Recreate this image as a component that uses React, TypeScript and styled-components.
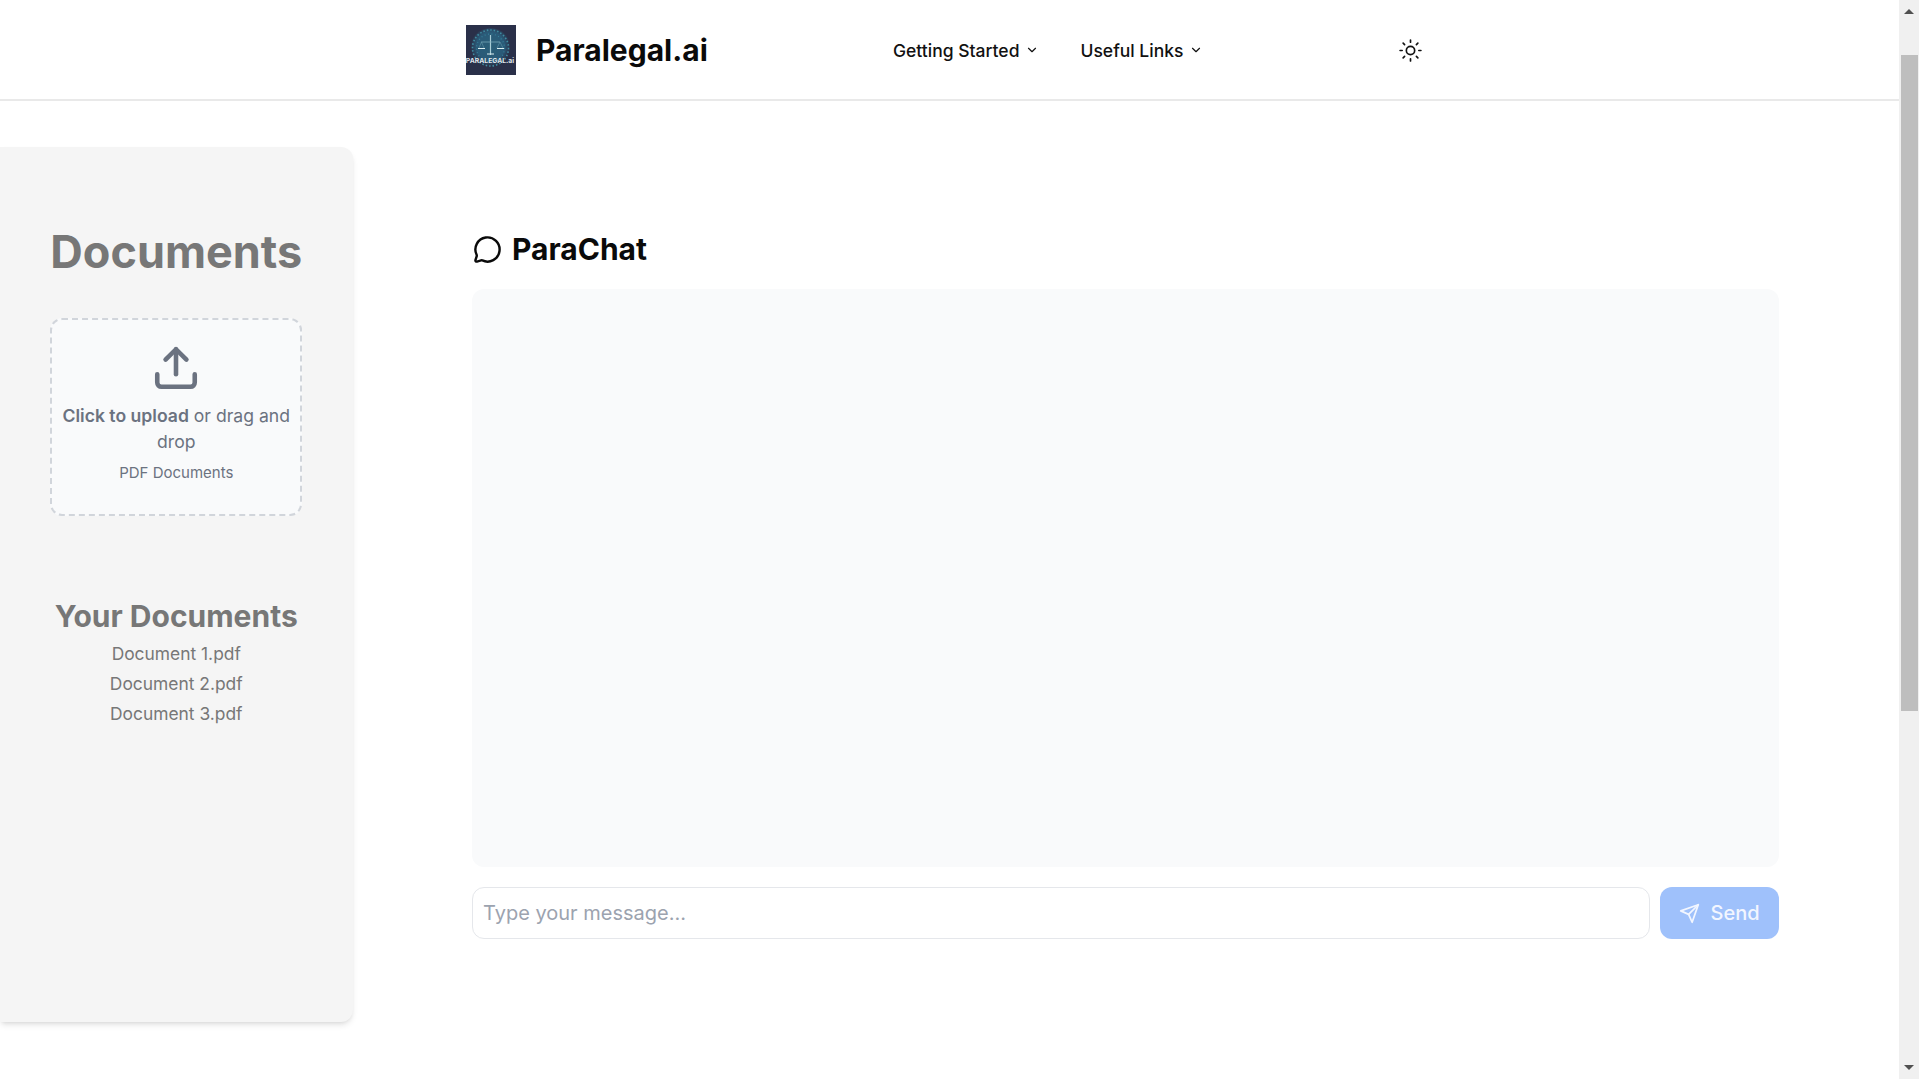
import React from "react";
import styled, { createGlobalStyle } from "styled-components";
import { ChevronDown, MessageCircle, Sun, Upload } from "lucide-react";
import { FiSend } from "react-icons/fi";

const GlobalStyle = createGlobalStyle`
  html, body {
    margin: 0;
    padding: 0;
    height: 100%;
    overflow: hidden;
    background: #fff;
    font-family: "Inter", "Liberation Sans", sans-serif;
  }
  * {
    box-sizing: border-box;
  }
`;

const documents = ["Document 1.pdf", "Document 2.pdf", "Document 3.pdf"];
const navItems = ["Getting Started", "Useful Links"];

const Logo = () => (
  <LogoBox viewBox="0 0 50 50" role="img" aria-label="Paralegal.ai logo">
    <defs>
      <radialGradient id="logoGlow" cx="50%" cy="45%" r="50%">
        <stop offset="0%" stopColor="#2a5f78" />
        <stop offset="70%" stopColor="#2a5a78" />
        <stop offset="100%" stopColor="#2a3048" />
      </radialGradient>
    </defs>
    <rect width="50" height="50" fill="#2a3049" />
    <circle cx="24.5" cy="23" r="20" fill="url(#logoGlow)" />
    <circle cx="24.5" cy="23" r="18" fill="none" stroke="#3f8ea3" strokeWidth="1.6" strokeDasharray="1.5 2" />
    <circle cx="24.5" cy="23" r="14" fill="none" stroke="#37809a" strokeWidth="1.2" strokeDasharray="1 2.5" />
    <path d="M24.5 10v20" stroke="#a9cdd6" strokeWidth="1.2" fill="none" />
    <path d="M15 17h19" stroke="#7fb0bd" strokeWidth="0.7" fill="none" />
    <path d="M13 23l2.5-6 2.5 6M31 23l3-6 3 6" stroke="#6fa4b2" strokeWidth="0.5" fill="none" />
    <path d="M12 23.5h7M31 23.5h7M21 29h7" stroke="#dbeef0" strokeWidth="1" />
    <text x="24" y="37.5" textAnchor="middle" fontFamily="Inter, sans-serif" fontSize="6.8" fontWeight="700" fill="#dfe4ea">
      PARALEGAL.ai
    </text>
  </LogoBox>
);

export default function App() {
  return (
    <Page>
      <GlobalStyle />
      <Content>
        <Header>
          <HeaderInner>
            <Brand>
              <Logo />
              <BrandName>Paralegal.ai</BrandName>
            </Brand>
            <Nav>
              {navItems.map(item => (
                <NavItem key={item}>
                  {item}
                  <ChevronDown size={14} strokeWidth={2} />
                </NavItem>
              ))}
            </Nav>
            <ThemeToggle>
              <Sun size={25} strokeWidth={1.6} />
            </ThemeToggle>
          </HeaderInner>
        </Header>
        <Body>
          <Sidebar>
            <SidebarTitle>Documents</SidebarTitle>
            <DropZone>
              <Upload size={50} strokeWidth={2.2} />
              <DropText>
                <strong>Click to upload</strong> or drag and drop
              </DropText>
              <DropHint>PDF Documents</DropHint>
            </DropZone>
            <ListTitle>Your Documents</ListTitle>
            <DocList>
              {documents.map(doc => (
                <DocItem key={doc}>{doc}</DocItem>
              ))}
            </DocList>
          </Sidebar>
          <Chat>
            <ChatTitle>
              <MessageCircle size={29} strokeWidth={2} />
              ParaChat
            </ChatTitle>
            <ChatWindow />
            <Composer>
              <MessageInput placeholder="Type your message..." />
              <SendButton disabled>
                <FiSend size={21} />
                Send
              </SendButton>
            </Composer>
          </Chat>
        </Body>
      </Content>
      <ScrollBar>
        <ArrowUp />
        <ScrollThumb />
        <ArrowDown />
      </ScrollBar>
    </Page>
  );
}

const Page = styled.div`
  display: flex;
  width: 100%;
  height: 100vh;
  overflow: hidden;
`;

const Content = styled.div`
  flex: 1;
  min-width: 0;
`;

const Header = styled.header`
  height: 101px;
  border-bottom: 2px solid #e9e9e9;
`;

const HeaderInner = styled.div`
  display: flex;
  align-items: center;
  width: 968px;
  height: 100%;
  margin: 0 auto;
  padding-left: 0.5px;
`;

const Brand = styled.div`
  display: flex;
  align-items: center;
  gap: 20px;
  width: 427px;
`;

const LogoBox = styled.svg`
  width: 50px;
  height: 50px;
  flex: none;
`;

const BrandName = styled.span`
  font-size: 30px;
  font-weight: 700;
  color: #0a0a0a;
`;

const Nav = styled.nav`
  display: flex;
  gap: 41px;
  margin-top: 1px;
`;

const NavItem = styled.div`
  display: flex;
  align-items: center;
  gap: 6px;
  font-size: 17.5px;
  font-weight: 500;
  color: #111;
`;

const ThemeToggle = styled.div`
  display: flex;
  margin-top: 1px;
  margin-left: auto;
  margin-right: 11px;
  color: #111;
`;

const Body = styled.main`
  display: flex;
  align-items: flex-start;
  padding-top: 46px;
`;

const Sidebar = styled.aside`
  display: flex;
  flex-direction: column;
  align-items: center;
  width: 352.5px;
  height: 875px;
  flex: none;
  padding-top: 77px;
  background: #f5f5f5;
  border-radius: 0 12px 12px 0;
  box-shadow: 0 4px 6px -1px rgba(0, 0, 0, 0.1), 0 2px 4px -2px rgba(0, 0, 0, 0.1);
  color: #777;
`;

const SidebarTitle = styled.h2`
  margin: 0 0 38px;
  font-size: 45px;
  line-height: 56px;
  font-weight: 700;
`;

const DropZone = styled.div`
  display: flex;
  flex-direction: column;
  align-items: center;
  width: 252px;
  height: 198px;
  padding: 23px 8px 0;
  background: #f9fafb;
  border: 2px dashed #d1d5db;
  border-radius: 12px;
  color: #6b7280;
`;

const DropText = styled.p`
  margin: 10px 0 0;
  font-size: 17.6px;
  line-height: 25.5px;
  text-align: center;

  strong {
    font-weight: 600;
  }
`;

const DropHint = styled.p`
  margin: 8px 0 0;
  font-size: 15px;
  line-height: 22px;
`;

const ListTitle = styled.h3`
  margin: 82px 0 0;
  font-size: 30px;
  line-height: 36px;
  font-weight: 700;
`;

const DocList = styled.ul`
  margin: 5px 0 0;
  padding: 0;
  list-style: none;
  text-align: center;
`;

const DocItem = styled.li`
  font-size: 17.4px;
  line-height: 30px;
`;

const Chat = styled.section`
  display: flex;
  flex-direction: column;
  width: 1307px;
  margin-left: 119.5px;
  padding-top: 84px;
`;

const ChatTitle = styled.h1`
  display: flex;
  align-items: center;
  gap: 10.5px;
  height: 36px;
  margin: 0 0 22px;
  padding-left: 0.5px;
  font-size: 30px;
  font-weight: 700;
  color: #0a0a0a;
`;

const ChatWindow = styled.div`
  height: 578px;
  background: #f9fafb;
  border-radius: 12px;
`;

const Composer = styled.div`
  display: flex;
  gap: 10px;
  margin-top: 20px;
`;

const MessageInput = styled.input`
  flex: 1;
  height: 52px;
  padding: 0 10px;
  background: #fff;
  border: 1px solid #e5e7eb;
  border-radius: 12px;
  font-family: inherit;
  font-size: 20px;
  outline: none;

  &::placeholder {
    color: #9ca3af;
  }
`;

const SendButton = styled.button`
  display: flex;
  align-items: center;
  justify-content: center;
  gap: 10px;
  width: 119px;
  height: 52px;
  background: #9fc1fb;
  border: none;
  border-radius: 12px;
  color: #f2f6ff;
  font-family: inherit;
  font-size: 20px;
  font-weight: 500;
`;

const ScrollBar = styled.div`
  display: flex;
  flex-direction: column;
  align-items: center;
  width: 20px;
  flex: none;
  background: #f0f0f0;
`;

const ArrowUp = styled.div`
  width: 0;
  height: 0;
  margin-top: 9px;
  border-left: 5px solid transparent;
  border-right: 5px solid transparent;
  border-bottom: 5px solid #505050;
`;

const ScrollThumb = styled.div`
  width: 17px;
  height: 656px;
  margin-top: 41px;
  background: #bebebe;
`;

const ArrowDown = styled.div`
  width: 0;
  height: 0;
  margin-top: auto;
  margin-bottom: 9px;
  border-left: 5px solid transparent;
  border-right: 5px solid transparent;
  border-top: 5px solid #505050;
`;
